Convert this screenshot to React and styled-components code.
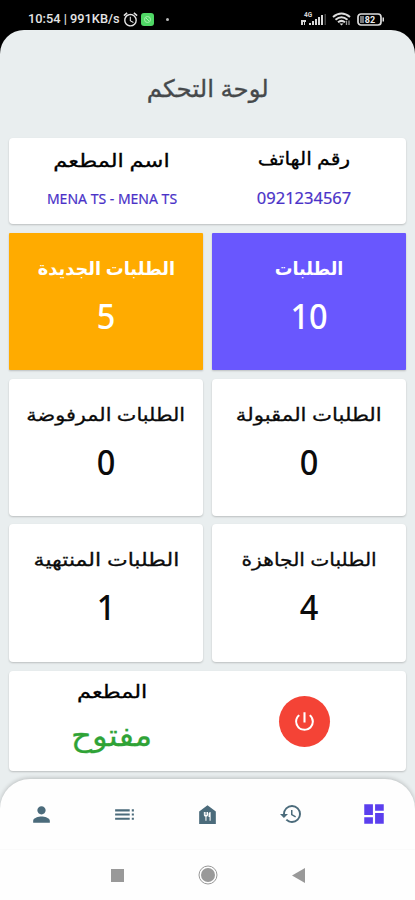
import React from 'react';
import styled, { createGlobalStyle } from 'styled-components';
import {
  MdAlarm,
  MdDashboard,
  MdFoodBank,
  MdHistory,
  MdPerson,
  MdPowerSettingsNew,
  MdToc,
} from 'react-icons/md';

const GlobalStyle = createGlobalStyle`
  * {
    box-sizing: border-box;
  }

  body {
    margin: 0;
    background: #000;
    font-family: 'Noto Sans', 'DejaVu Sans', sans-serif;
  }
`;

const Screen = styled.div`
  display: flex;
  flex-direction: column;
  width: 415px;
  height: 900px;
  overflow: hidden;
  background: #000;
`;

const StatusBar = styled.header`
  display: flex;
  justify-content: space-between;
  align-items: center;
  height: 30px;
  padding: 8px 30px 0 28px;
  flex-shrink: 0;
  color: #e4e4e4;
`;

const StatusGroup = styled.div`
  display: flex;
  align-items: center;
  gap: ${({ $gap }) => $gap}px;
`;

const Clock = styled.span`
  width: 92px;
  font-family: Roboto, sans-serif;
  font-size: 12.8px;
  font-weight: 500;
  line-height: 16px;
  white-space: nowrap;
`;

const AppBadge = styled.span`
  display: flex;
  align-items: center;
  justify-content: center;
  width: 13px;
  height: 13px;
  border-radius: 3px;
  background: #4fd765;
`;

const Dot = styled.span`
  width: 3px;
  height: 3px;
  margin-left: 7px;
  border-radius: 50%;
  background: #bbb;
`;

const Page = styled.main`
  display: flex;
  flex-direction: column;
  flex: 1;
  border-radius: 24px 24px 0 0;
  background: #e9eeef;
`;

const Title = styled.h1`
  display: flex;
  justify-content: center;
  align-items: center;
  height: 108px;
  margin: 0;
  padding-top: 6px;
  color: #46494b;
  font-size: 24px;
  font-weight: 400;
  -webkit-text-stroke: 0.3px currentColor;
`;

const Content = styled.div`
  display: flex;
  flex-direction: column;
  flex: 1;
  gap: 9px;
  padding: 0 9px;
`;

const Card = styled.section`
  display: grid;
  grid-template-columns: 1fr 1fr;
  height: ${({ $height }) => $height}px;
  padding: 0 6px 0 7px;
  border-radius: 4px;
  background: #fff;
  box-shadow: 0 1px 2px rgba(0, 0, 0, 0.2);
`;

const Column = styled.div`
  display: flex;
  flex-direction: column;
  align-items: center;
  padding-top: ${({ $top }) => $top || 0}px;
`;

const Grid = styled.div`
  display: grid;
  grid-template-columns: 194px 194px;
  justify-content: space-between;
  grid-auto-rows: 137.2px;
  row-gap: 8.5px;
`;

const Tile = styled.section`
  display: flex;
  flex-direction: column;
  align-items: center;
  padding-top: 18px;
  border-radius: ${({ $color }) => ($color ? 1 : 4)}px;
  background: ${({ $color }) => $color || '#fff'};
  color: ${({ $color }) => ($color ? '#fff' : '#0b0b0b')};
  box-shadow: 0 1px 2px rgba(0, 0, 0, 0.2);
`;

const Label = styled.h2`
  margin: 0;
  font-size: 18px;
  font-weight: ${({ $bold }) => ($bold ? 700 : 400)};
  line-height: 34px;
  white-space: nowrap;
  -webkit-text-stroke: ${({ $bold }) => ($bold ? 0 : 0.3)}px currentColor;
`;

const Count = styled.strong`
  margin-top: 6px;
  font-size: 35px;
  font-weight: 500;
  line-height: 50px;
`;

const Value = styled.span`
  color: #4a32c8;
  font-size: ${({ $size }) => $size}px;
  line-height: 24px;
  margin-top: ${({ $gap }) => $gap}px;
  white-space: nowrap;
  -webkit-text-stroke: 0.2px currentColor;
`;

// condenses or widens a line of text to the proportions of the app's typeface
const Fit = styled.span`
  display: inline-block;
  transform: scaleX(${({ $x }) => $x});
`;

const State = styled.strong`
  color: #2fa336;
  font-size: 30px;
  font-weight: 400;
  line-height: 54px;
  -webkit-text-stroke: 0.3px currentColor;
`;

const PowerButton = styled.button`
  display: flex;
  align-items: center;
  justify-content: center;
  width: 51px;
  height: 51px;
  padding: 0;
  border: 0;
  border-radius: 50%;
  background: #f44336;
  color: #fff;
`;

const BottomArea = styled.footer`
  height: 121px;
  border-radius: 30px 30px 0 0;
  background: #fefefe;
  box-shadow: 0 -1px 4px rgba(0, 0, 0, 0.2);
`;

const NavBar = styled.nav`
  display: grid;
  grid-template-columns: repeat(5, 83px);
  align-items: center;
  height: 71px;
  border-bottom: 1px solid #fafafa;
`;

const NavItem = styled.a`
  display: flex;
  justify-content: center;
  color: ${({ $active }) => ($active ? '#5b3fee' : '#4b6b7b')};
`;

const SystemBar = styled.div`
  display: flex;
  justify-content: center;
  align-items: center;
  gap: 74px;
  height: 50px;
`;

const tiles = [
  { label: 'الطلبات', count: 10, color: '#6957fe', x: 0.98 },
  { label: 'الطلبات الجديدة', count: 5, color: '#ffab00', x: 0.99 },
  { label: 'الطلبات المقبولة', count: 0, x: 1.18 },
  { label: 'الطلبات المرفوضة', count: 0, x: 1.155 },
  { label: 'الطلبات الجاهزة', count: 4, x: 1.125 },
  { label: 'الطلبات المنتهية', count: 1, x: 1.225 },
];

const navItems = [
  { icon: MdPerson, size: 25 },
  { icon: MdToc, size: 25 },
  { icon: MdFoodBank, size: 25 },
  { icon: MdHistory, size: 24 },
  { icon: MdDashboard, size: 26, active: true },
];

function SignalIcon() {
  return (
    <svg width="26" height="16" viewBox="0 0 26 16" fill="#d8d8d8">
      <text x="3" y="6" fontFamily="Roboto, sans-serif" fontSize="6.5" fontWeight="700">
        4G
      </text>
      <path d="M0 9h5v2H4v3H3v-3H2v3H0z" />
      <path d="M8 12h2v2H8zM11 10h2v4h-2zM14 8h2v6h-2zM17 6h2v8h-2zM20 4h2v10h-2z" />
      <path d="M23.5 3H25v11h-1.5z" fill="#444" />
    </svg>
  );
}

function WifiIcon() {
  return (
    <svg width="20" height="15" viewBox="0 0 20 15" fill="none" stroke="#ddd" strokeWidth="2">
      <path d="M1 5Q9.5 -2 18 5M3.5 7.7Q9.5 2.7 15.5 7.7M6 10.3Q9.5 7.5 13 10.3" />
      <path d="M7.5 11.5h4l-2 2z" fill="#ddd" stroke="none" />
      <path d="M14.5 13V9M17 8.5v4.5" stroke="#999" strokeWidth="1.3" />
    </svg>
  );
}

function BatteryIcon() {
  return (
    <svg width="28" height="13" viewBox="0 0 28 13">
      <rect x="1" y="1" width="23" height="11" rx="3" fill="none" stroke="#ddd" strokeWidth="1.7" />
      <path d="M25.5 4.5h1.5v4h-1.5z" fill="#ddd" />
      <path d="M3 3h4v7H3z" fill="#777" />
      <text x="13" y="9.8" fill="#eee" fontFamily="Roboto, sans-serif" fontSize="9" fontWeight="700" textAnchor="middle">
        82
      </text>
    </svg>
  );
}

export default function App() {
  return (
    <Screen>
      <GlobalStyle />
      <StatusBar>
        <StatusGroup $gap={2}>
          <Clock>10:54 | 991KB/s</Clock>
          <MdAlarm size={17} />
          <StatusGroup $gap={5}>
            <AppBadge>
              <svg width="9" height="9" viewBox="0 0 9 9" fill="none" stroke="#a7f0ae">
                <circle cx="4.5" cy="4.5" r="3" />
                <path d="M3 3l3 3" />
              </svg>
            </AppBadge>
            <Dot />
          </StatusGroup>
        </StatusGroup>
        <StatusGroup $gap={5}>
          <SignalIcon />
          <WifiIcon />
          <BatteryIcon />
        </StatusGroup>
      </StatusBar>
      <Page>
        <Title dir="rtl">
          <Fit $x={1.02}>لوحة التحكم</Fit>
        </Title>
        <Content dir="rtl">
          <Card $height={86}>
            <Column $top={3}>
              <Label>
                <Fit $x={1.13}>رقم الهاتف</Fit>
              </Label>
              <Value $size={16.5} $gap={11}>
                0921234567
              </Value>
            </Column>
            <Column $top={5}>
              <Label>
                <Fit $x={1.25}>اسم المطعم</Fit>
              </Label>
              <Value $size={14} $gap={10}>
                MENA TS - MENA TS
              </Value>
            </Column>
          </Card>
          <Grid>
            {tiles.map(({ label, count, color, x }) => (
              <Tile key={label} $color={color}>
                <Label $bold={Boolean(color)}>
                  <Fit $x={x}>{label}</Fit>
                </Label>
                <Count>
                  <Fit $x={0.93}>{count}</Fit>
                </Count>
              </Tile>
            ))}
          </Grid>
          <Card $height={100}>
            <Column $top={25}>
              <PowerButton>
                <MdPowerSettingsNew size={25} />
              </PowerButton>
            </Column>
            <Column $top={3}>
              <Label>
                <Fit $x={1.25}>المطعم</Fit>
              </Label>
              <State>
                <Fit $x={1.08}>مفتوح</Fit>
              </State>
            </Column>
          </Card>
        </Content>
        <BottomArea>
          <NavBar>
            {navItems.map(({ icon: Icon, size, active }, index) => (
              <NavItem key={index} $active={active}>
                <Icon size={size} />
              </NavItem>
            ))}
          </NavBar>
          <SystemBar>
            <svg width="13" height="13" viewBox="0 0 13 13">
              <path d="M0 0h13v13H0z" fill="#999" />
            </svg>
            <svg width="20" height="20" viewBox="0 0 20 20">
              <circle cx="10" cy="10" r="9" fill="none" stroke="#999" />
              <circle cx="10" cy="10" r="7" fill="#999" />
            </svg>
            <svg width="13" height="15" viewBox="0 0 13 15">
              <path d="M13 0v15L0 7.5z" fill="#999" />
            </svg>
          </SystemBar>
        </BottomArea>
      </Page>
    </Screen>
  );
}
